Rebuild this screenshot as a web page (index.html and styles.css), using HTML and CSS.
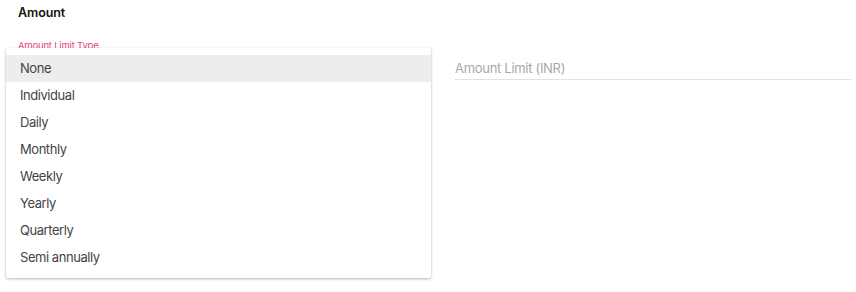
FILE: index.html
```html
<!DOCTYPE html>
<html>
<head>
<meta charset="utf-8">
<link rel="stylesheet" href="styles.css">
</head>
<body>
<div class="page">
  <div class="title">Amount</div>
  <div class="row">
    <div class="field left">
      <div class="label">Amount Limit Type</div>
      <div class="select"></div>
      <ul class="menu">
        <li class="item selected">None</li>
        <li class="item">Individual</li>
        <li class="item">Daily</li>
        <li class="item">Monthly</li>
        <li class="item">Weekly</li>
        <li class="item">Yearly</li>
        <li class="item">Quarterly</li>
        <li class="item">Semi annually</li>
      </ul>
    </div>
    <div class="field right">
      <div class="input">Amount Limit (INR)</div>
    </div>
  </div>
</div>
</body>
</html>
```
FILE: styles.css
```css
html, body {
  margin: 0;
  padding: 0;
  background: #fff;
}
body {
  font-family: Inter, "Noto Sans", sans-serif;
  color: #333;
  width: 856px;
  height: 292px;
  overflow: hidden;
}
.page {
  padding: 5px 5px 0 18px;
}
.title {
  font-size: 12.5px;
  font-weight: 600;
  color: #111;
  line-height: 16px;
  letter-spacing: -0.1px;
}
.row {
  display: grid;
  grid-template-columns: 413px 396px;
  column-gap: 24px;
  margin-top: 19px;
}
.field {
  position: relative;
}
.label {
  font-size: 9.5px;
  color: #e8457c;
  line-height: 12px;
  letter-spacing: -0.2px;
}
.select {
  height: 28px;
}
.menu {
  position: absolute;
  top: 8px;
  left: -12px;
  width: 425px;
  margin: 0;
  padding: 7px 0;
  list-style: none;
  background: #fff;
  box-shadow: 0 1px 3px rgba(0,0,0,0.28), 0 0 1px rgba(0,0,0,0.08);
  border-radius: 2px;
}
.item {
  height: 27px;
  line-height: 27px;
  padding-left: 14px;
  font-size: 13px;
  color: #444;
  letter-spacing: -0.45px;
}
.item.selected {
  background: #ededed;
}
.input {
  margin-top: 17px;
  height: 22px;
  line-height: 22px;
  font-size: 13px;
  color: #a8a8a8;
  letter-spacing: -0.3px;
  border-bottom: 1px solid #e2e2e2;
}
```
